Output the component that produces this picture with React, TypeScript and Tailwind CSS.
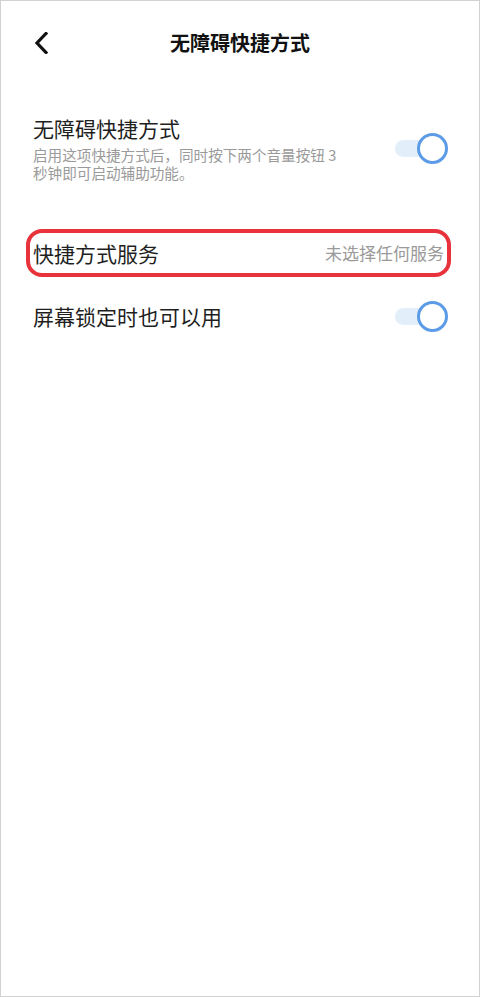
import React from "react";

function Toggle() {
  return (
    <div className="relative w-[53px] h-[31px] shrink-0">
      <div className="absolute left-0 top-[7px] w-[40px] h-[17px] rounded-full bg-[#e3eefb]" />
      <div className="absolute right-0 top-0 w-[31px] h-[31px] rounded-full border-[3px] border-[#5c9ce6] bg-white" />
    </div>
  );
}

export default function App() {
  return (
    <div
      className="w-[480px] h-[997px] border border-[#d2d2d2] bg-white text-[#1f1f1f]"
      style={{ fontFamily: '"Noto Sans CJK SC", "Noto Sans", sans-serif' }}
    >
      <div className="h-[83px] flex items-center">
        <div className="w-[80px] pl-[33px] flex items-center">
          <svg width="14" height="22" viewBox="0 0 14 22" fill="none">
            <path d="M12 1.5L3 11l9 9.5" stroke="#111" strokeWidth="3.2" strokeLinecap="square" strokeLinejoin="miter" />
          </svg>
        </div>
        <div className="flex-1 text-center text-[20px] font-bold leading-[28px] text-[#111]">无障碍快捷方式</div>
        <div className="w-[80px]" />
      </div>

      <div className="pt-[30px] pl-[32px] pr-[31px] flex items-center justify-between">
        <div>
          <div className="text-[21px] leading-[28px]">无障碍快捷方式</div>
          <div className="mt-[4px] text-[14.6px] leading-[18px] text-[#9a9a9a]">
            启用这项快捷方式后，同时按下两个音量按钮 3<br />秒钟即可启动辅助功能。
          </div>
        </div>
        <Toggle />
      </div>

      <div className="mt-[47px] ml-[25px] mr-[28px] h-[48px] rounded-[16px] border-[4px] border-[#e8333d] pl-[3px] pr-[3px] flex items-center justify-between">
        <div className="text-[21px] leading-[28px]">快捷方式服务</div>
        <div className="text-[17px] leading-[24px] text-[#9a9a9a]">未选择任何服务</div>
      </div>

      <div className="h-[78px] pl-[32px] pr-[31px] flex items-center justify-between">
        <div className="text-[21px] leading-[28px]">屏幕锁定时也可以用</div>
        <Toggle />
      </div>
    </div>
  );
}
